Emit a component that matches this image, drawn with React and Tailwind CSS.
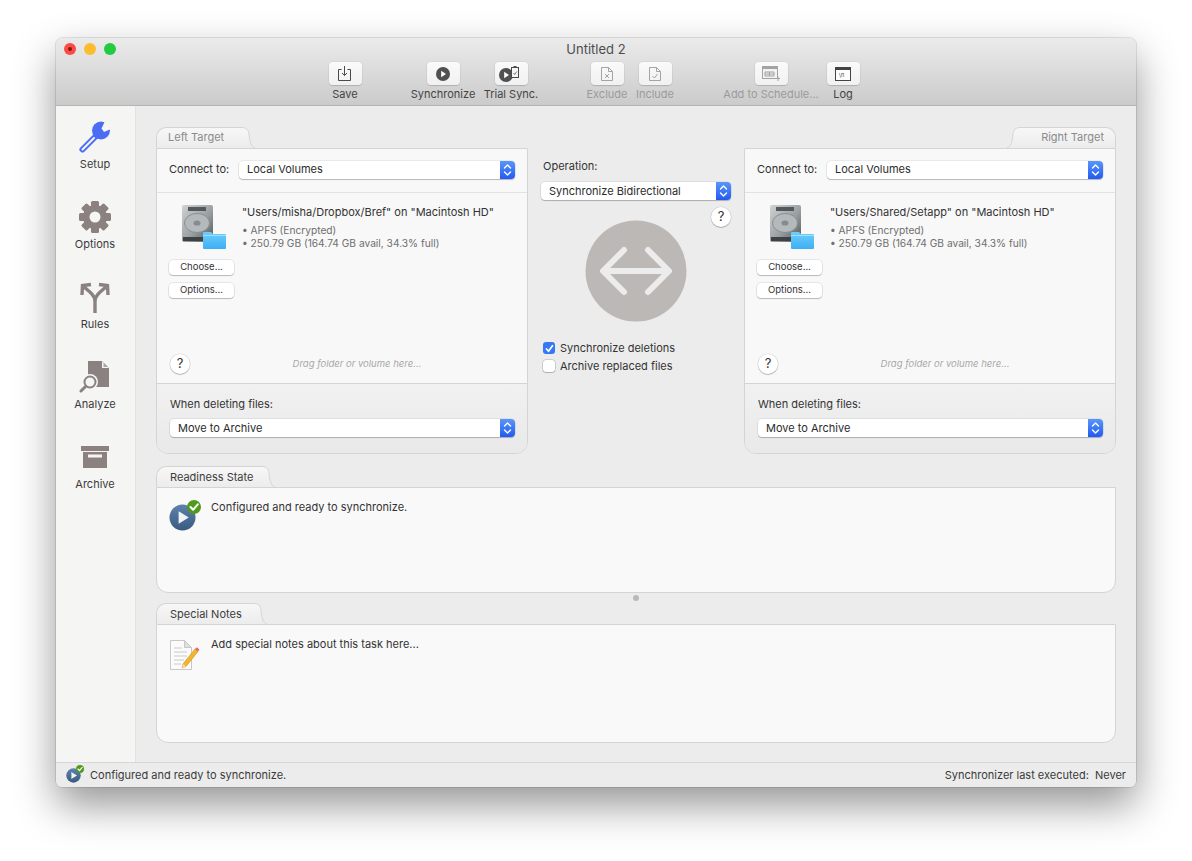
const font = { fontFamily: "Inter, 'Liberation Sans', sans-serif" };

function Stepper() {
  return (
    <span className="flex h-full w-[15px] shrink-0 items-center justify-center rounded-r-[4px] bg-gradient-to-b from-[#5a95f9] to-[#2458f2]">
      <svg width="9" height="14" viewBox="0 0 9 14" fill="none" stroke="#fff" strokeWidth="1.4" strokeLinecap="round" strokeLinejoin="round">
        <path d="M1.5 5 4.5 2l3 3" />
        <path d="M1.5 9l3 3 3-3" />
      </svg>
    </span>
  );
}

function Select({ label, className }) {
  return (
    <div className={"flex h-[18px] items-center rounded-[4px] bg-white text-[11px] text-[#2b2b2b] shadow-[0_0_0_0.5px_rgba(0,0,0,0.12),0_1px_1px_rgba(0,0,0,0.22)] " + className}>
      <span className="flex-1 truncate pl-2">{label}</span>
      <Stepper />
    </div>
  );
}

function SmallButton({ label }) {
  return (
    <button className="flex h-[15px] w-[65px] items-center justify-center rounded-[4px] bg-white text-[9.5px] text-[#333] shadow-[0_0_0_0.5px_rgba(0,0,0,0.14),0_1px_1px_rgba(0,0,0,0.2)]">
      {label}
    </button>
  );
}

function HelpButton() {
  return (
    <span className="flex h-[20px] w-[20px] items-center justify-center rounded-full bg-white text-[13px] text-[#333] shadow-[0_0_0_0.5px_rgba(0,0,0,0.14),0_1px_1px_rgba(0,0,0,0.2)]">
      ?
    </span>
  );
}

function Tab({ label, right, muted, width, inset }) {
  const curve = right
    ? "M14 .5C8.500 .5 6.500 2.500 6 7 5.500 14 4 20.500 0 20.500"
    : "M0 .5C5.500 .5 7.500 2.500 8 7 8.500 14 10 20.500 14 20.500";
  const fill = curve + (right ? "V21H14Z" : "V21H0Z");
  const flare = (
    <svg width="14" height="21" viewBox="0 0 14 21" className="block shrink-0">
      <defs>
        <linearGradient id="tabfade" x1="0" y1="0" x2="0" y2="1">
          <stop offset="0" stopColor="#f7f7f7" />
          <stop offset="1" stopColor="#ececec" />
        </linearGradient>
      </defs>
      <path d={fill} fill="url(#tabfade)" />
      <path d={curve} fill="none" stroke="#d4d4d4" />
    </svg>
  );
  return (
    <div className={"flex h-[21px] " + (right ? "justify-end" : "")}>
      {right && flare}
      <div
        className={
          "flex h-[21px] items-center border-t border-[#d4d4d4] bg-gradient-to-b from-[#f7f7f7] to-[#ececec] text-[11px] " +
          (right ? "justify-end rounded-tr-[10px] border-r " : "rounded-tl-[10px] border-l ") +
          (muted ? "pb-[1px] text-[#8b8b8b]" : "text-[#3c3c3c]")
        }
        style={{ width, paddingLeft: right ? 0 : inset, paddingRight: right ? inset : 0 }}
      >
        {label}
      </div>
      {!right && flare}
    </div>
  );
}

function DriveIcon() {
  return (
    <div className="relative h-[46px] w-[46px]">
      <svg width="46" height="46" viewBox="0 0 46 46">
        <defs>
          <linearGradient id="hd" x1="0" y1="0" x2="1" y2="1">
            <stop offset="0" stopColor="#cfd3d4" />
            <stop offset="0.55" stopColor="#9aa0a2" />
            <stop offset="1" stopColor="#4e5254" />
          </linearGradient>
          <linearGradient id="folder" x1="0" y1="0" x2="0" y2="1">
            <stop offset="0" stopColor="#6fcdfb" />
            <stop offset="1" stopColor="#3cb0f5" />
          </linearGradient>
        </defs>
        <rect x="2" y="1" width="31" height="37" rx="2" fill="url(#hd)" />
        <rect x="8" y="3" width="18" height="4" fill="#55585a" />
        <rect x="3" y="33" width="28" height="4" fill="#3f4244" />
        <ellipse cx="17" cy="19" rx="12.500" ry="9.500" fill="#b4b9bb" stroke="#8a8f91" />
        <ellipse cx="17" cy="19" rx="3.500" ry="2.600" fill="#868b8d" />
        <path d="M23 29a1 1 0 0 1 1-1h7l2 2h12a1 1 0 0 1 1 1v13a1 1 0 0 1-1 1H24a1 1 0 0 1-1-1z" fill="url(#folder)" />
        <rect x="23" y="31" width="23" height="1" fill="#9be0fd" />
      </svg>
    </div>
  );
}

function TargetPanel({ side, path }) {
  const right = side === "Right";
  return (
    <div className="w-[372px] shrink-0">
      <Tab label={side + " Target"} right={right} muted width={right ? 95 : 85} inset={11} />
      <div className="h-[306px] overflow-hidden rounded-b-[12px] rounded-t-none border border-[#d4d4d4] bg-[#f8f8f8]">
        <div className="flex h-[44px] items-center border-b border-[#e2e2e2] pb-[2px] pl-[12px] pr-[12px]">
          <span className="w-[70px] text-[11px] text-[#2f2f2f]">Connect to:</span>
          <Select label="Local Volumes" className="flex-1" />
        </div>
        <div className="flex h-[191px] flex-col border-b border-[#d4d4d4] pl-[12px]">
          <div className="flex h-[161px]">
            <div className="w-[73px] shrink-0 pt-[11px]">
              <div className="pl-[11px]"><DriveIcon /></div>
              <div className="mt-[10px]"><SmallButton label="Choose..." /></div>
              <div className="mt-[8px]"><SmallButton label="Options..." /></div>
            </div>
            <div className="pt-[12px]">
              <div className="text-[11px] leading-[14px] text-[#333]">{path}</div>
              <div className="mt-[5px] text-[10.2px] leading-[13px] text-[#6f6f6f]">• APFS (Encrypted)</div>
              <div className="text-[10.2px] leading-[13px] text-[#6f6f6f]">• 250.79 GB (164.74 GB avail, 34.3% full)</div>
            </div>
          </div>
          <div className="flex items-center pl-[1px]">
            <HelpButton />
            <span className="flex-1 pr-[2px] pl-[7px] text-center text-[9.5px] italic text-[#a8a8a8]">Drag folder or volume here...</span>
            <span className="w-[8px]" />
          </div>
        </div>
        <div className="h-[69px] bg-gradient-to-b from-[#f1f1f1] to-[#e9e9e9] pl-[13px] pr-[12px] pt-[13px]">
          <div className="text-[11px] leading-[14px] text-[#333]">When deleting files:</div>
          <Select label="Move to Archive" className="mt-[8px]" />
        </div>
      </div>
    </div>
  );
}

function PlayBadge({ size, badge }) {
  return (
    <div className="relative" style={{ width: size, height: size }}>
      <svg width={size} height={size} viewBox="0 0 28 28">
        <defs>
          <linearGradient id="pb" x1="0" y1="0" x2="0" y2="1">
            <stop offset="0" stopColor="#5e82ab" />
            <stop offset="1" stopColor="#3a5a80" />
          </linearGradient>
        </defs>
        <circle cx="14" cy="14" r="13.500" fill="url(#pb)" />
        <path d="M10 7.500 20.500 14 10 20.500z" fill="#f1f4f7" />
      </svg>
      <svg className="absolute" style={{ width: badge, height: badge, right: -badge * 0.35, top: -badge * 0.3 }} viewBox="0 0 14 14">
        <circle cx="7" cy="7" r="7" fill="#4f9a1c" />
        <path d="M3.500 7l2.600 2.800L10.800 4.300" fill="none" stroke="#fff" strokeWidth="2" strokeLinecap="round" strokeLinejoin="round" />
      </svg>
    </div>
  );
}

function NotesIcon() {
  return (
    <svg width="32" height="32" viewBox="0 0 32 32">
      <path d="M1.500 .5h14l7 7v22h-21z" fill="#fbfbfb" stroke="#c8c8c8" />
      <path d="M15.500 .5v7h7z" fill="#dedede" stroke="#c8c8c8" />
      <path d="M5 8h8M5 12h13M5 16h13M5 20h10M5 24h7" stroke="#c9c9c9" />
      <path d="M26 9l3 2.500-12 15-4 1.500 1-4z" fill="#f5b52c" stroke="#c98c14" strokeWidth="0.600" />
      <path d="M26 9l1.800-1.800 2.600 2.400-1.400 1.900z" fill="#e8646a" />
      <path d="M13 28l1-4 3 2.500z" fill="#f3dcb5" />
    </svg>
  );
}

function ToolIcon({ name, dim }) {
  const c = dim ? "#a3a3a3" : "#4a4a4a";
  if (name === "save")
    return (
      <svg width="18" height="18" viewBox="0 0 18 18" fill="none" stroke={c}>
        <path d="M5.500 4.500h-3v11h12v-11h-3" />
        <path d="M8.500 1v9.500M6 8l2.500 2.500L11 8" />
      </svg>
    );
  if (name === "sync")
    return (
      <svg width="14" height="14" viewBox="0 0 14 14">
        <circle cx="7" cy="7" r="7" fill="#505050" />
        <path d="M5.200 3.800 10 7l-4.800 3.200z" fill="#fff" />
      </svg>
    );
  if (name === "trial")
    return (
      <svg width="28" height="18" viewBox="0 0 28 18">
        <circle cx="9" cy="10" r="7" fill="#505050" />
        <path d="M7.200 6.800 12 10l-4.800 3.200z" fill="#fff" />
        <rect x="14.500" y="2.500" width="7" height="10" fill="#f5f5f5" stroke="#4a4a4a" />
        <rect x="16.500" y="1" width="3" height="2" fill="#4a4a4a" />
        <path d="M16.500 8l1.200 1.500 2-3" fill="none" stroke="#777" />
      </svg>
    );
  if (name === "exclude" || name === "include")
    return (
      <svg width="14" height="16" viewBox="0 0 14 16" fill="none" stroke={c}>
        <path d="M1.500 1.500h7l4 4v9h-11z" />
        <path d="M8.500 1.500v4h4" />
        {name === "exclude" ? <path d="M5 8l4 4M9 8l-4 4" /> : <path d="M4.500 10l2 2 3-4" />}
      </svg>
    );
  if (name === "schedule")
    return (
      <svg width="18" height="16" viewBox="0 0 18 16">
        <rect x="0.500" y="0.500" width="15" height="12" fill="#f2f2f2" stroke={c} />
        <rect x="0" y="0" width="16" height="3" fill={c} />
        <path d="M3 6h9v4H3zM7.500 6v4M3 8h9" fill="none" stroke={c} />
        <path d="M14 12.500h4M16 10.500v4.500" stroke={c} />
      </svg>
    );
  return (
    <svg width="16" height="14" viewBox="0 0 16 14">
      <rect x="0.500" y="0.500" width="15" height="13" fill="#fdfdfd" stroke="#444" />
      <rect x="0" y="0" width="16" height="3" fill="#444" />
      <text x="4" y="9.500" fontSize="5.500" fill="#444" fontFamily="Inter, sans-serif">\n</text>
    </svg>
  );
}

function ToolItem({ icon, label, dim, className }) {
  return (
    <div className={"flex w-[48px] flex-col items-center " + (className || "")}>
      <span className="flex h-[23px] w-[33px] shrink-0 items-center justify-center rounded-[4px] bg-gradient-to-b from-[#fafafa] to-[#f1f1f1] shadow-[0_0_0_0.5px_rgba(0,0,0,0.07),0_1px_1px_rgba(0,0,0,0.14)]">
        <ToolIcon name={icon} dim={dim} />
      </span>
      <span className={"mt-[2px] whitespace-nowrap text-[11px] leading-[14px] " + (dim ? "text-[#9b9b9b]" : "text-[#444]")}>{label}</span>
    </div>
  );
}

function SideIcon({ name }) {
  const c = "#8b8280";
  if (name === "setup")
    return (
      <svg width="32" height="32" viewBox="0 0 32 32">
        <circle cx="22" cy="9.500" r="9" fill="#4b6cf5" />
        <path d="M22.500 7.500 26.500 -1H33V7.500L25 11Z" fill="#f5f5f3" />
        <path d="M3.500 28.500 17 15" stroke="#4b6cf5" strokeWidth="6" strokeLinecap="round" />
        <path d="M3.500 28.500 15 17" stroke="#f5f5f3" strokeWidth="2" strokeLinecap="round" />
      </svg>
    );
  if (name === "options")
    return (
      <svg width="32" height="32" viewBox="0 0 32 32">
        <g fill={c}>
          <rect x="12" y="0" width="8" height="32" rx="1.500" />
          <rect x="12" y="0" width="8" height="32" rx="1.500" transform="rotate(45 16 16)" />
          <rect x="12" y="0" width="8" height="32" rx="1.500" transform="rotate(90 16 16)" />
          <rect x="12" y="0" width="8" height="32" rx="1.500" transform="rotate(135 16 16)" />
          <circle cx="16" cy="16" r="12" />
        </g>
        <circle cx="16" cy="16" r="5.500" fill="#f5f5f3" />
      </svg>
    );
  if (name === "rules")
    return (
      <svg width="32" height="32" viewBox="0 0 32 32" fill="none" stroke={c} strokeWidth="3.400">
        <path d="M16 32V20C16 15 12 12 5 6" />
        <path d="M16 20C16 15 20 12 27 6" />
        <path d="M3 14 3.500 4.500 12 3.500M29 14 28.500 4.500 20 3.500" />
      </svg>
    );
  if (name === "analyze")
    return (
      <svg width="32" height="32" viewBox="0 0 32 32">
        <path d="M9 0h14l7 7v19H9z" fill={c} />
        <path d="M23 0v7h7z" fill="#f5f5f3" />
        <path d="M24.500 1.500 29 6h-4.500z" fill={c} opacity="0.700" />
        <circle cx="11" cy="21" r="8" fill="#f5f5f3" />
        <circle cx="11" cy="21" r="5.500" fill="#f5f5f3" stroke={c} strokeWidth="2" />
        <path d="M6.500 25.500 2 30" stroke={c} strokeWidth="3" strokeLinecap="round" />
      </svg>
    );
  return (
    <svg width="28" height="22" viewBox="0 0 28 22">
      <rect x="0" y="0" width="28" height="5" fill={c} />
      <path d="M2 6h24v16H2z" fill={c} />
      <rect x="7" y="8.500" width="14" height="3" fill="#f5f5f3" />
    </svg>
  );
}

function SideItem({ icon, label }) {
  return (
    <div className="flex h-[80px] flex-col items-center">
      <div className="flex h-[34px] items-center justify-center"><SideIcon name={icon} /></div>
      <span className="mt-[3px] text-[11px] leading-[14px] text-[#3b3b3b]">{label}</span>
    </div>
  );
}

function InfoPanel({ tab, tabWidth, height, icon, text }) {
  return (
    <div>
      <Tab label={tab} width={tabWidth} inset={13} />
      <div className="flex rounded-b-[12px] border border-[#d4d4d4] bg-[#f9f9f9] pl-[12px] pt-[12px]" style={{ height }}>
        <div className="w-[42px] shrink-0">{icon}</div>
        <span className="text-[11px] leading-[14px] text-[#333]">{text}</span>
      </div>
    </div>
  );
}

export default function App() {
  return (
    <div className="h-[861px] w-[1192px] overflow-hidden bg-white pl-[56px] pt-[38px]" style={font}>
      <div className="flex h-[749px] w-[1080px] flex-col overflow-hidden rounded-[6px] bg-[#ececec] shadow-[0_0_0_0.5px_rgba(0,0,0,0.2),0_18px_42px_rgba(0,0,0,0.42)]">
        <header className="h-[68px] shrink-0 border-b border-[#b4b4b4] bg-gradient-to-b from-[#ebebeb] to-[#cbcbcb]">
          <div className="relative flex h-[24px] items-center justify-center text-[13px] text-[#4d4d4d]">
            <div className="absolute left-[8px] top-[5px] flex gap-[8px]">
              <span className="flex h-[12px] w-[12px] items-center justify-center rounded-full bg-[#fc4a44]">
                <span className="h-[4px] w-[4px] rounded-full bg-[#7c1a14]" />
              </span>
              <span className="h-[12px] w-[12px] rounded-full bg-[#fdbb2e]" />
              <span className="h-[12px] w-[12px] rounded-full bg-[#22cb42]" />
            </div>
            Untitled 2
          </div>
          <div className="flex pl-[265px]">
            <ToolItem icon="save" label="Save" />
            <ToolItem icon="sync" label="Synchronize" className="ml-[50px]" />
            <ToolItem icon="trial" label="Trial Sync." className="ml-[20px]" />
            <ToolItem icon="exclude" label="Exclude" dim className="ml-[48px]" />
            <ToolItem icon="include" label="Include" dim />
            <ToolItem icon="schedule" label="Add to Schedule..." dim className="ml-[68px]" />
            <ToolItem icon="log" label="Log" className="ml-[24px]" />
          </div>
        </header>

        <div className="flex min-h-0 flex-1">
          <aside className="w-[80px] shrink-0 border-r border-[#e3e3e3] bg-[#f5f5f3] pr-[1px] pt-[14px]">
            <SideItem icon="setup" label="Setup" />
            <SideItem icon="options" label="Options" />
            <SideItem icon="rules" label="Rules" />
            <SideItem icon="analyze" label="Analyze" />
            <SideItem icon="archive" label="Archive" />
          </aside>

          <main className="flex-1 pl-[20px] pr-[20px] pt-[21px]">
            <div className="flex">
              <TargetPanel side="Left" path={'"Users/misha/Dropbox/Bref" on "Macintosh HD"'} />
              <div className="flex-1 pl-[13px] pr-[13px] pt-[32px]">
                <div className="pl-[2px] text-[11px] leading-[14px] text-[#333]">Operation:</div>
                <Select label="Synchronize Bidirectional" className="mt-[9px]" />
                <div className="mt-[7px] flex justify-end"><HelpButton /></div>
                <div className="flex justify-center">
                  <svg width="102" height="102" viewBox="0 0 102 102" className="-mt-[7px]">
                    <circle cx="51" cy="51" r="50.500" fill="#bcb8b6" />
                    <path d="M19 51h64M39 30 18 51l21 21M63 30l21 21-21 21" fill="none" stroke="#ececec" strokeWidth="6" strokeLinecap="round" strokeLinejoin="round" />
                  </svg>
                </div>
                <label className="mt-[20px] flex h-[12px] items-center gap-[5px] pl-[2px] text-[11px] text-[#333]">
                  <span className="flex h-[12px] w-[12px] items-center justify-center rounded-[3px] bg-[#3478f6]">
                    <svg width="9" height="9" viewBox="0 0 9 9" fill="none" stroke="#fff" strokeWidth="1.700" strokeLinecap="round" strokeLinejoin="round">
                      <path d="M1.500 5 3.500 7.300 7.500 1.700" />
                    </svg>
                  </span>
                  Synchronize deletions
                </label>
                <label className="mt-[6px] flex h-[12px] items-center gap-[5px] pl-[2px] text-[11px] text-[#333]">
                  <span className="h-[12px] w-[12px] rounded-[3px] bg-white shadow-[0_0_0_0.5px_rgba(0,0,0,0.25),0_1px_1px_rgba(0,0,0,0.15)]" />
                  Archive replaced files
                </label>
              </div>
              <TargetPanel side="Right" path={'"Users/Shared/Setapp" on "Macintosh HD"'} />
            </div>

            <div className="mt-[12px]">
              <InfoPanel
                tab="Readiness State"
                tabWidth={105}
                height={106}
                icon={<div className="pt-[4px]"><PlayBadge size={27} badge={14} /></div>}
                text="Configured and ready to synchronize."
              />
            </div>
            <div className="flex h-[10px] items-center justify-center">
              <span className="h-[6px] w-[6px] rounded-full bg-[#b9b9b9]" />
            </div>
            <InfoPanel
              tab="Special Notes"
              tabWidth={97}
              height={119}
              icon={<div className="pt-[3px]"><NotesIcon /></div>}
              text="Add special notes about this task here..."
            />
          </main>
        </div>

        <footer className="flex h-[25px] shrink-0 items-center justify-between border-t border-[#d6d6d6] bg-[#ececec] pl-[10px] pr-[10px] text-[11px] text-[#3a3a3a]">
          <div className="flex items-center gap-[9px]">
            <PlayBadge size={15} badge={8} />
            <span>Configured and ready to synchronize.</span>
          </div>
          <span>Synchronizer last executed:&nbsp; Never</span>
        </footer>
      </div>
    </div>
  );
}
